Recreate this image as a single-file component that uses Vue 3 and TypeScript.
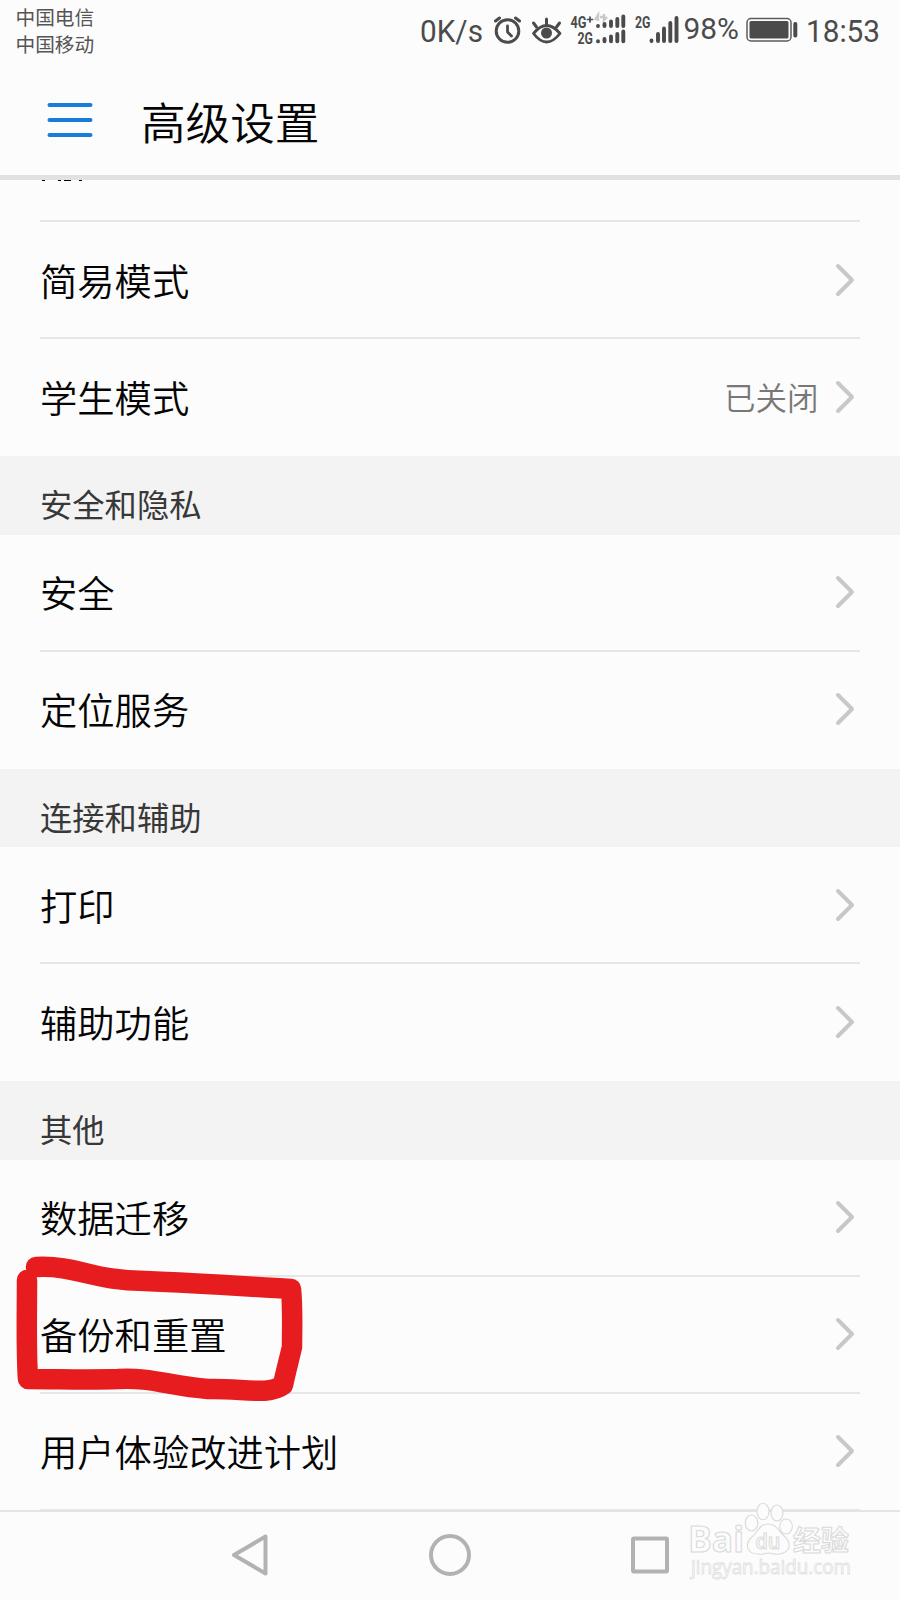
<script setup lang="ts">
interface Row { label: string; value?: string }
interface Section { title?: string; rows: Row[] }
const sections: Section[] = [
  { rows: [{ label: '简易模式' }, { label: '学生模式', value: '已关闭' }] },
  { title: '安全和隐私', rows: [{ label: '安全' }, { label: '定位服务' }] },
  { title: '连接和辅助', rows: [{ label: '打印' }, { label: '辅助功能' }] },
  { title: '其他', rows: [{ label: '数据迁移' }, { label: '备份和重置' }, { label: '用户体验改进计划' }] },
]
</script>

<template>
  <div class="phone">
    <header class="status">
      <div class="carriers"><span>中国电信</span><span>中国移动</span></div>
      <svg class="icons" width="490" height="60" viewBox="410 0 490 60">
        <g class="ink">
          <text x="420" y="42" font-size="30.5" textLength="63" lengthAdjust="spacingAndGlyphs">0K/s</text>
          <text x="683.5" y="39" font-size="30" textLength="55.5" lengthAdjust="spacingAndGlyphs">98%</text>
          <text x="806" y="42" font-size="31" textLength="74" lengthAdjust="spacingAndGlyphs">18:53</text>
          <g font-size="16" font-weight="700">
            <text x="570.5" y="27.5" textLength="16" lengthAdjust="spacingAndGlyphs">4G</text>
            <text x="577.5" y="43.5" textLength="15.5" lengthAdjust="spacingAndGlyphs">2G</text>
            <text x="635" y="28" textLength="15.5" lengthAdjust="spacingAndGlyphs">2G</text>
          </g>
        </g>
        <g class="line">
          <circle cx="507.5" cy="31" r="11.3" stroke-width="3" />
          <path d="M507.500 26v6l4 4" stroke-width="2.800" />
          <path d="M495.500 20.500l4.500-3M520 17.500l-4.500-3" stroke-width="0" />
          <path d="M495.500 21l4-3M515.500 18l4 3" stroke-width="3" />
          <path d="M533.500 33.500Q546.500 17.500 560 33.500Q546.500 50.500 533.500 33.500Z" stroke-width="2.800" />
          <path d="M546.500 25v-6M536.500 27l-3-4M556.500 27l3-4" stroke-width="3" />
          <path d="M590 17v5M587.500 19.500h5" stroke-width="1.700" />
        </g>
        <circle cx="546.500" cy="33" r="5.500" fill="#4b4b4b" />
        <path d="M595 20l3-5v6M604 14v6l3-3M600 17h3" fill="none" stroke="#c9c9c9" stroke-width="2.400" />
        <g class="bars" stroke-width="3.900">
          <path d="M598 26v.1M604.500 24v2.100M611 21.500v4.600M617.300 19v7.100M623.300 16.500v9.600" />
          <path d="M598 41.300v.1M604.500 39v2.300M611 36.500v4.800M617.300 34v7.300M623.300 31.500v9.800" />
          <path d="M651.500 40.500v.6M658 34v7.100M664 28.500v12.600M670.300 23v18.100M676.500 18v23.100" />
        </g>
        <rect x="747" y="18.500" width="44" height="22.500" rx="4" fill="none" stroke="#5b5b5b" stroke-width="1.500" />
        <rect x="749.500" y="21" width="39" height="17.500" rx="1.500" fill="#4b4b4b" />
        <rect x="793.300" y="22" width="4" height="15.500" rx="1.800" fill="#4b4b4b" />
      </svg>
    </header>
    <div class="titlebar">
      <svg class="menu" width="46" height="36" viewBox="0 0 46 36">
        <path d="M2.500 3h41M2.500 18h41M2.500 33h41" stroke="#197cd9" stroke-width="4" stroke-linecap="round" />
      </svg>
      <h1>高级设置</h1>
    </div>
    <main>
      <div class="partial">
        <svg width="50" height="2" viewBox="0 0 50 2"><path d="M2 0h3v1h-3zM18 0h3v1h-3zM24 0h7v1h-7zM39 0h3v1h-3z" /></svg>
      </div>
      <section v-for="(s, i) in sections" :key="i">
        <h2 v-if="s.title">{{ s.title }}</h2>
        <div v-for="r in s.rows" :key="r.label" class="row">
          <span class="label">{{ r.label }}</span>
          <span v-if="r.value" class="value">{{ r.value }}</span>
          <svg class="chev" width="20" height="34" viewBox="0 0 20 34">
            <path d="M3 3l14 14L3 31" fill="none" stroke="#c8c8c8" stroke-width="4" stroke-linecap="round" stroke-linejoin="round" />
          </svg>
        </div>
      </section>
    </main>
    <nav>
      <svg width="900" height="88" viewBox="0 1512 900 88" fill="none" stroke="#b2b2b2" stroke-width="4" stroke-linejoin="round">
        <path d="M234 1555L265.500 1536.500V1573.500Z" />
        <circle cx="450" cy="1555" r="19" />
        <rect x="633" y="1538.500" width="34" height="33" rx="1" />
      </svg>
    </nav>
    <svg class="mark" width="320" height="170" viewBox="0 1240 320 170">
      <path d="M36 1267C78 1265 92 1281 145 1281C200 1283 240 1286 291 1289C293 1310 292 1330 292 1347C289 1360 285 1375 283 1385C268 1396 242 1388 208 1389C170 1386 150 1377 118 1379C88 1380 60 1379 28 1379C26 1350 27 1315 27 1280" />
    </svg>
    <svg class="watermark" width="190" height="100" viewBox="680 1495 190 100">
      <g fill="#fcfcfc" stroke="#dadada" stroke-width="1.100">
        <text x="688" y="1552" font-size="35" font-weight="700" textLength="56" lengthAdjust="spacingAndGlyphs">Bai</text>
        <path d="M768 1524C759 1524 758 1532 752 1537C744 1544 747 1554 758 1554C763 1555 764 1553 768 1553C773 1553 775 1555 779 1554C790 1553 792 1543 785 1537C778 1531 777 1524 768 1524Z" />
        <ellipse cx="751.500" cy="1523" rx="6.300" ry="8" />
        <ellipse cx="763" cy="1511.500" rx="6" ry="8.300" />
        <ellipse cx="777" cy="1513" rx="6" ry="8" />
        <ellipse cx="786" cy="1526.500" rx="6.300" ry="7.500" />
        <text x="755.500" y="1549" font-size="22" font-weight="600" textLength="25" lengthAdjust="spacingAndGlyphs">du</text>
        <text class="cjk" x="793" y="1551" font-size="28" font-weight="700" textLength="56">经验</text>
        <text x="691" y="1574" font-size="19.500" stroke-width=".8" stroke="#e0e0e0" textLength="160" lengthAdjust="spacingAndGlyphs">jingyan.baidu.com</text>
      </g>
    </svg>
  </div>
</template>

<style>
body { background: #fcfcfc; }
</style>
<style scoped>
.phone { position: relative; width: 900px; height: 1600px; overflow: hidden; background: #fcfcfc; color: #050505; font-family: "Noto Sans CJK SC", sans-serif; display: flex; flex-direction: column; }
.status { height: 62px; display: flex; justify-content: space-between; flex: none; }
.carriers { display: flex; flex-direction: column; padding: 3px 0 0 15.500px; font-size: 19.700px; line-height: 27px; color: #555; }
.ink { fill: #4b4b4b; font-family: Roboto, sans-serif; }
.line { fill: none; stroke: #4b4b4b; stroke-linecap: round; stroke-linejoin: round; }
.bars { fill: none; stroke: #4b4b4b; stroke-linecap: round; }
.titlebar { height: 113px; flex: none; display: flex; align-items: center; border-bottom: 5px solid #e1e1e1; padding-left: 47px; }
.menu { margin-top: 3px; }
h1 { margin: 4px 0 0 48px; font-size: 44.600px; font-weight: 350; line-height: 60px; }
main { flex: none; height: 1330px; }
.partial { height: 42px; box-sizing: border-box; margin: 0 40px; border-bottom: 2px solid #e6e6e6; }
.partial svg { display: block; }
section { display: flow-root; }
h2 { margin: 0; height: 78.500px; padding: 18px 40px 0; box-sizing: border-box; background: #f3f3f3; color: #383838; font-weight: 400; font-size: 32.300px; line-height: 58px; }
.row { height: 117px; box-sizing: border-box; margin: 0 40px; border-bottom: 2px solid #e6e6e6; display: flex; align-items: center; }
section:not(:last-child) .row:last-child { border-bottom-color: transparent; }
.label { flex: 1; font-size: 37.300px; font-weight: 350; line-height: 56px; margin-top: 0; }
.value { font-size: 31.500px; font-weight: 350; line-height: 48px; margin: -1px 16.500px 0 0; color: #787878; }
.chev { margin: 0 5px 0 0; }
nav { height: 88px; flex: none; border-top: 2px solid #e4e4e4; }
nav svg { display: block; }
.mark { position: absolute; left: 0; top: 1240px; fill: none; stroke: #e71c1e; stroke-width: 20.500px; stroke-linecap: round; stroke-linejoin: round; }
.watermark { position: absolute; left: 680px; top: 1495px; font-family: "Open Sans", sans-serif; }
.watermark .cjk { font-family: "Noto Sans CJK SC", sans-serif; }
</style>
